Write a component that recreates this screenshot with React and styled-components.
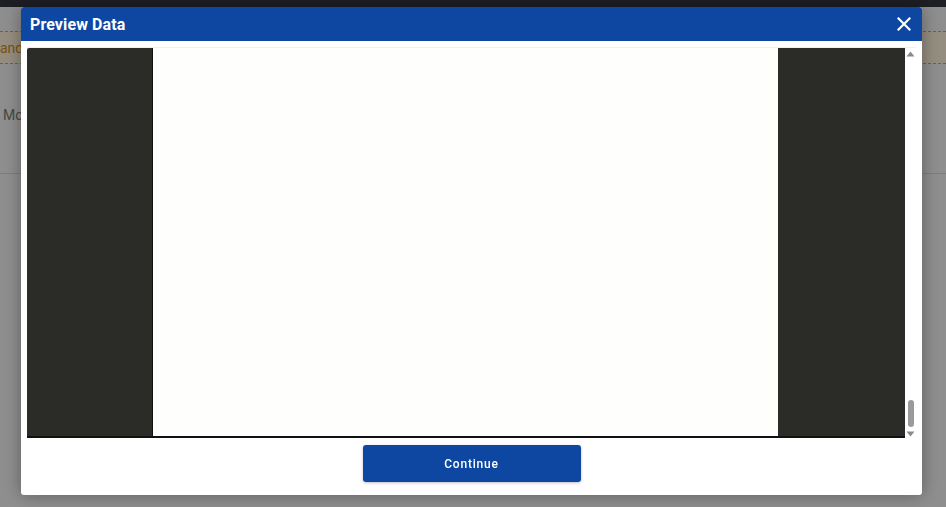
import React from "react";
import styled, { createGlobalStyle } from "styled-components";

const Global = createGlobalStyle`
  html, body { margin: 0; padding: 0; background: #f4f4f4; overflow: hidden; }
  body { font-family: Roboto, "Liberation Sans", Arial, sans-serif; }
  * { box-sizing: border-box; }
`;

const Page = styled.div`
  width: 946px;
  height: 507px;
  display: flex;
  flex-direction: column;
  background: #f4f4f4;
`;

const TopNav = styled.div`
  height: 7px;
  background: #1d1f24;
  flex: none;
`;

const Banner = styled.div`
  margin-top: 24px;
  height: 33px;
  border-top: 1px dashed #e0a040;
  border-bottom: 1px dashed #b0a898;
  background: #fff3dc;
  display: flex;
  align-items: center;
  color: #d48a1c;
  font-size: 14px;
`;

const SubRow = styled.div`
  height: 110px;
  border-bottom: 1px solid #d8d8d8;
  display: flex;
  align-items: center;
  padding-left: 3px;
  color: #7a7a7a;
  font-size: 14px;
  padding-bottom: 8px;
`;

const Overlay = styled.div`
  position: fixed;
  inset: 7px 0 0 0;
  background: rgba(0, 0, 0, 0.42);
`;

const Modal = styled.div`
  position: fixed;
  left: 21px;
  top: 7px;
  width: 901px;
  height: 488px;
  background: #fff;
  border-radius: 3px;
  box-shadow: 0 0 18px rgba(0, 0, 0, 0.35);
  display: flex;
  flex-direction: column;
  overflow: hidden;
`;

const Header = styled.div`
  height: 34px;
  flex: none;
  background: #0d47a1;
  display: flex;
  align-items: center;
  justify-content: space-between;
  padding: 0 9px 0 9px;
`;

const Title = styled.h2`
  margin: 0;
  color: #fff;
  font-size: 16px;
  font-weight: 700;
  letter-spacing: 0.1px;
`;

const CloseBtn = styled.button`
  border: 0;
  background: transparent;
  padding: 0;
  width: 18px;
  height: 18px;
  display: flex;
  align-items: center;
  justify-content: center;
  cursor: pointer;
`;

const Body = styled.div`
  flex: 1;
  display: flex;
  flex-direction: column;
  align-items: center;
  padding: 6px 6px 13px 6px;
  gap: 7px;
`;

const Frame = styled.div`
  width: 100%;
  height: 391px;
  display: flex;
  border-top: 1px solid #f0f0f0;
`;

const Viewer = styled.div`
  flex: 1;
  background: #2b2b27;
  display: flex;
  justify-content: center;
  border-bottom: 2px solid #111;
  border-radius: 2px 0 0 0;
`;

const Sheet = styled.div`
  width: 626px;
  height: 100%;
  background: #fefefd;
  border-left: 1px solid #111;
  margin-right: 2px;
`;

const Scrollbar = styled.div`
  width: 11px;
  flex: none;
  background: #fff;
  display: flex;
  flex-direction: column;
  align-items: center;
  padding: 3px 0 1px;
`;

const Thumb = styled.div`
  width: 6px;
  height: 27px;
  border-radius: 3px;
  background: #9a9a9a;
  margin-top: auto;
  margin-bottom: 4px;
`;

const ContinueBtn = styled.button`
  width: 218px;
  height: 37px;
  border: 0;
  border-radius: 3px;
  background: #0d47a1;
  color: #fff;
  font-family: Roboto, "Liberation Sans", Arial, sans-serif;
  font-size: 12px;
  font-weight: 500;
  letter-spacing: 0.8px;
  box-shadow: 0 1px 3px rgba(0, 0, 0, 0.25);
  cursor: pointer;
`;

const Arrow = ({ up }) => (
  <svg width="9" height="6" viewBox="0 0 9 6">
    <path d={up ? "M4.5 0.5 L8.5 5.5 L0.5 5.5 Z" : "M0.5 0.5 L8.5 0.5 L4.5 5.5 Z"} fill="#8a8a8a" />
  </svg>
);

export default function App() {
  return (
    <>
      <Global />
      <Page>
        <TopNav />
        <Banner>and Conditions</Banner>
        <SubRow>Mode</SubRow>
      </Page>
      <Overlay />
      <Modal role="dialog" aria-label="Preview Data">
        <Header>
          <Title>Preview Data</Title>
          <CloseBtn aria-label="Close">
            <svg width="14" height="14" viewBox="0 0 14 14">
              <path d="M1.5 1.5 L12.5 12.5 M12.5 1.5 L1.5 12.5" stroke="#fff" strokeWidth="2.2" strokeLinecap="square" />
            </svg>
          </CloseBtn>
        </Header>
        <Body>
          <Frame>
            <Viewer>
              <Sheet />
            </Viewer>
            <Scrollbar>
              <Arrow up />
              <Thumb />
              <Arrow />
            </Scrollbar>
          </Frame>
          <ContinueBtn>Continue</ContinueBtn>
        </Body>
      </Modal>
    </>
  );
}
